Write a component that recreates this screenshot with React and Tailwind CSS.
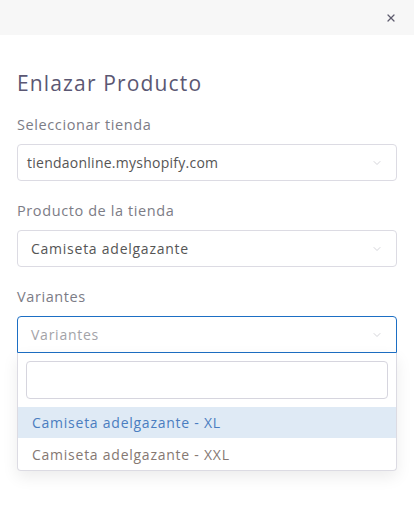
import { ChevronDown, X } from "lucide-react";

const font = { fontFamily: '"Open Sans", "Liberation Sans", sans-serif' };

function Field({ label, children }) {
  return (
    <div className="flex flex-col">
      <label className="text-[14.5px] leading-[20px] text-[#7c7c86] tracking-[0.6px] mb-[9px]">{label}</label>
      {children}
    </div>
  );
}

function SelectBox({ value, placeholder, active, narrowText }) {
  return (
    <div
      className={`h-[37px] flex items-center justify-between rounded-[4px] border bg-white ${
        active ? "border-[#1d6fc4] rounded-b-none" : "border-[#dcdbe3]"
      } ${narrowText ? "pl-[9px]" : "pl-[13px]"} pr-[13px]`}
    >
      <span
        className={`text-[14px] ${value ? "text-[#555]" : "text-[#a3a3a8]"} ${narrowText ? "tracking-[0.25px]" : "tracking-[0.75px]"}`}
      >
        {value || placeholder}
      </span>
      <ChevronDown className="w-[12px] h-[12px] text-[#c5c5cc]" strokeWidth={1.5} />
    </div>
  );
}

export default function App() {
  return (
    <div className="w-[414px] h-[530px] bg-white overflow-hidden" style={font}>
      <div className="h-[35px] bg-[#f7f7f7] flex items-center justify-end pr-[17px]">
        <X className="w-[12px] h-[12px] text-[#5e5c6e]" strokeWidth={2.5} />
      </div>

      <div className="px-[17px] pt-[33px]">
        <h2 className="text-[21px] leading-[30px] text-[#5b5773] tracking-[1.15px] mb-[17px]">Enlazar Producto</h2>

        <div className="flex flex-col gap-[20px]">
          <Field label="Seleccionar tienda">
            <SelectBox value="tiendaonline.myshopify.com" narrowText />
          </Field>
          <Field label="Producto de la tienda">
            <SelectBox value="Camiseta adelgazante" />
          </Field>
          <Field label="Variantes">
            <div className="relative">
              <SelectBox placeholder="Variantes" active />
              <div className="absolute left-0 right-0 top-[37px] bg-white border border-t-0 border-[#dcdbe3] rounded-b-[4px] shadow-[0_6px_16px_rgba(0,0,0,0.08)] pt-[8px]">
                <div className="mx-[8px] h-[38px] rounded-[4px] border border-[#d6d5de]" />
                <ul className="mt-[8px] text-[14px] tracking-[0.75px]">
                  <li className="h-[31px] flex items-center pl-[14px] bg-[#dfeaf5] text-[#4a7dc0]">Camiseta adelgazante - XL</li>
                  <li className="h-[32px] flex items-center pl-[14px] text-[#857872]">Camiseta adelgazante - XXL</li>
                </ul>
              </div>
            </div>
          </Field>
        </div>
      </div>
    </div>
  );
}
